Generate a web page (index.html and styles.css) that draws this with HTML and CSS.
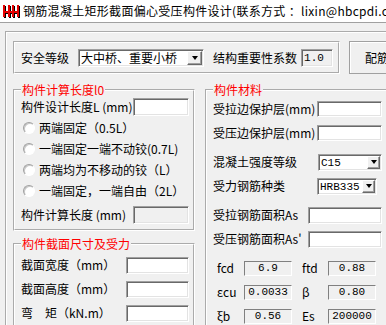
FILE: index.html
```html
<!DOCTYPE html>
<html lang="zh-CN">
<head>
    <meta charset="UTF-8">
    <meta name="viewport" content="width=device-width, initial-scale=1.0">
    <title>钢筋混凝土矩形截面偏心受压构件设计</title>
    <link rel="stylesheet" href="styles.css">
</head>
<body>
    <div class="titlebar">
        <svg class="app-icon" viewBox="0 0 18 14" aria-hidden="true">
            <g fill="#000">
                <rect x="2" y="2" width="2" height="12"/>
                <rect x="7" y="2" width="2" height="12"/>
                <rect x="2" y="8" width="16" height="2"/>
                <rect x="11" y="2" width="2" height="12"/>
                <rect x="16" y="2" width="2" height="12"/>
            </g>
            <g fill="#e60000">
                <rect x="1" y="1" width="2" height="12"/>
                <rect x="6" y="1" width="2" height="12"/>
                <rect x="1" y="7" width="16" height="2"/>
                <rect x="10" y="1" width="2" height="12"/>
                <rect x="15" y="1" width="2" height="12"/>
            </g>
        </svg>
        <span class="title">钢筋混凝土矩形截面偏心受压构件设计(联系方式 ：lixin@hbcpdi.com)</span>
    </div>

    <div class="frame">
        <div class="top-row">
            <div class="safety">
                <span>安全等级</span>
                <div class="combo combo-grade">
                    <span class="combo-text">大中桥、重要小桥</span>
                    <span class="combo-btn"></span>
                </div>
                <span class="coef-label">结构重要性系数</span>
                <input class="field readonly coef" value="1.0" readonly>
            </div>
            <button class="btn-calc">配筋计算</button>
        </div>

        <div class="columns">
            <div class="col-left">
                <fieldset class="group group-len">
                    <legend>构件计算长度l0</legend>
                    <div class="row row-design">
                        <span>构件设计长度L (mm)</span>
                        <input class="field w56">
                    </div>
                    <label class="opt"><input type="radio" name="l0">两端固定（0.5L）</label>
                    <label class="opt"><input type="radio" name="l0">一端固定一端不动铰(0.7L)</label>
                    <label class="opt"><input type="radio" name="l0">两端均为不移动的铰（L）</label>
                    <label class="opt"><input type="radio" name="l0">一端固定，一端自由（2L）</label>
                    <div class="row row-calc">
                        <span>构件计算长度 (mm)</span>
                        <input class="field readonly w56" readonly>
                    </div>
                </fieldset>

                <fieldset class="group group-size">
                    <legend>构件截面尺寸及受力</legend>
                    <div class="row">
                        <span>截面宽度（mm）</span>
                        <input class="field w63">
                    </div>
                    <div class="row">
                        <span>截面高度（mm）</span>
                        <input class="field w63">
                    </div>
                    <div class="row">
                        <span>弯　矩（kN.m）</span>
                        <input class="field w63">
                    </div>
                </fieldset>
            </div>

            <fieldset class="group group-mat">
                <legend>构件材料</legend>
                <div class="blk">
                    <div class="row">
                        <span>受拉边保护层(mm)</span>
                        <input class="field w65">
                    </div>
                    <div class="row">
                        <span>受压边保护层(mm)</span>
                        <input class="field w65">
                    </div>
                </div>
                <div class="blk">
                    <div class="row">
                        <span>混凝土强度等级</span>
                        <div class="combo combo-small w64">
                            <span class="combo-text">C15</span>
                            <span class="combo-btn"></span>
                        </div>
                    </div>
                    <div class="row">
                        <span>受力钢筋种类</span>
                        <div class="combo combo-small w60">
                            <span class="combo-text">HRB335</span>
                            <span class="combo-btn"></span>
                        </div>
                    </div>
                </div>
                <div class="blk">
                    <div class="row">
                        <span>受拉钢筋面积As</span>
                        <input class="field w74">
                    </div>
                    <div class="row">
                        <span>受压钢筋面积As'</span>
                        <input class="field w74">
                    </div>
                </div>
                <div class="consts">
                    <span>fcd</span><span class="value">6.9</span>
                    <span class="c-right">ftd</span><span class="value">0.88</span>
                    <span>εcu</span><span class="value">0.0033</span>
                    <span class="c-right">β</span><span class="value">0.80</span>
                    <span>ξb</span><span class="value">0.56</span>
                    <span class="c-right">Es</span><span class="value">200000</span>
                </div>
            </fieldset>
        </div>
    </div>
</body>
</html>
```

FILE: styles.css
```css
* {
    box-sizing: border-box;
}
body {
    margin: 0;
    width: 386px;
    height: 325px;
    overflow: hidden;
    background: #f0f0f0;
    font-family: "Noto Sans CJK SC", "Noto Sans", sans-serif;
    font-size: 12px;
    line-height: 14px;
    color: #000;
}
.titlebar {
    display: flex;
    align-items: center;
    height: 23px;
    padding-left: 2px;
    background: #fff;
    border-bottom: 1px solid #a0a0a0;
    white-space: nowrap;
    overflow: hidden;
}
.app-icon {
    flex: none;
    width: 18px;
    height: 14px;
    margin-right: 3px;
}
.title {
    letter-spacing: 0.3px;
}
.frame {
    margin: 8px 0 0 5px;
    padding: 8px 0 0 6px;
    height: 300px;
    border-top: 2px groove #fff;
    border-left: 2px groove #fff;
}
.top-row {
    display: flex;
    height: 33px;
}
.safety {
    flex: none;
    display: flex;
    align-items: center;
    width: 327px;
    padding-left: 6px;
    border: 2px groove #fff;
}
.coef-label {
    margin-left: 9px;
}
.coef {
    margin-left: 4px;
    width: 32px;
    height: 16px;
}
.btn-calc {
    flex: none;
    margin-left: 9px;
    width: 80px;
    height: 33px;
    padding: 0;
    font: inherit;
    color: #000;
    background: #f0f0f0;
    border: 1px solid #a0a0a0;
    box-shadow: inset 1px 1px 0 #fff;
}

/* input boxes, combos */
.field {
    height: 18px;
    padding: 0 2px;
    font: 11px/14px "Liberation Mono", monospace;
    background: #fff;
    border: 1px solid;
    border-color: #a0a0a0 #fff #fff #a0a0a0;
    box-shadow: inset 1px 1px 0 #696969, inset -1px -1px 0 #e3e3e3;
    outline: none;
}
.field.readonly {
    background: #f0f0f0;
}
.w56 { width: 56px; }
.w60 { width: 60px; }
.w63 { width: 63px; height: 17px; }
.w64 { width: 64px; }
.w65 { width: 65px; height: 16px; }
.w74 { width: 74px; height: 17px; }
.combo {
    flex: none;
    display: flex;
    height: 18px;
    background: #fff;
    border: 1px solid;
    border-color: #a0a0a0 #fff #fff #a0a0a0;
    box-shadow: inset 1px 1px 0 #696969, inset -1px -1px 0 #e3e3e3;
    padding: 1px;
}
.combo-grade {
    margin-left: 9px;
    width: 126px;
}
.combo-small {
    height: 17px;
    font: 11px/14px "Liberation Mono", monospace;
}
.combo-text {
    flex: 1;
    padding-left: 1px;
    white-space: nowrap;
}
.combo-btn {
    flex: none;
    display: flex;
    align-items: center;
    justify-content: center;
    width: 15px;
    background: #f0f0f0;
    border: 1px solid;
    border-color: #fff #696969 #696969 #fff;
    box-shadow: inset -1px -1px 0 #a0a0a0;
}
.combo-btn::after {
    content: "";
    border-left: 3px solid transparent;
    border-right: 3px solid transparent;
    border-top: 4px solid #000;
}
.combo-small .combo-btn {
    width: 13px;
}

/* group boxes */
.columns {
    display: flex;
    gap: 10px;
    align-items: flex-start;
    margin-top: 9px;
}
.col-left {
    flex: none;
    display: flex;
    flex-direction: column;
    gap: 6px;
    width: 182px;
}
.group {
    margin: 0;
    min-width: 0;
    padding: 0 4px 0 6px;
    border: 2px groove #fff;
}
.group legend {
    padding: 0 1px;
    line-height: 14px;
    color: #f00;
}
.row {
    display: flex;
    align-items: center;
    justify-content: space-between;
    height: 24px;
    white-space: nowrap;
}
.row-design {
    height: 20px;
}
.row-calc {
    height: 28px;
}
.opt {
    display: flex;
    align-items: center;
    gap: 4px;
    height: 21px;
    padding-left: 2px;
    white-space: nowrap;
}
.opt input {
    appearance: none;
    flex: none;
    margin: 0;
    width: 12px;
    height: 12px;
    border-radius: 50%;
    background: #fff;
    border: 1px solid;
    border-color: #a0a0a0 #fff #fff #a0a0a0;
    box-shadow: inset 1px 1px 0 #c8c8c8;
}
.group-size {
    padding-top: 2px;
    height: 100px;
}
.group-mat {
    flex: none;
    display: flex;
    flex-direction: column;
    gap: 5px;
    width: 185px;
    padding-right: 6px;
}
.row .w60 {
    margin-right: 5px;
}
.consts {
    display: grid;
    grid-template-columns: 27px 48px 36px 48px;
    grid-auto-rows: 24px;
    align-items: center;
    padding-left: 4px;
}
.c-right {
    padding-left: 10px;
}
.value {
    height: 15px;
    font: 11px/13px "Liberation Mono", monospace;
    text-align: center;
    background: #f0f0f0;
    border: 1px solid;
    border-color: #808080 #fff #fff #808080;
}
```
